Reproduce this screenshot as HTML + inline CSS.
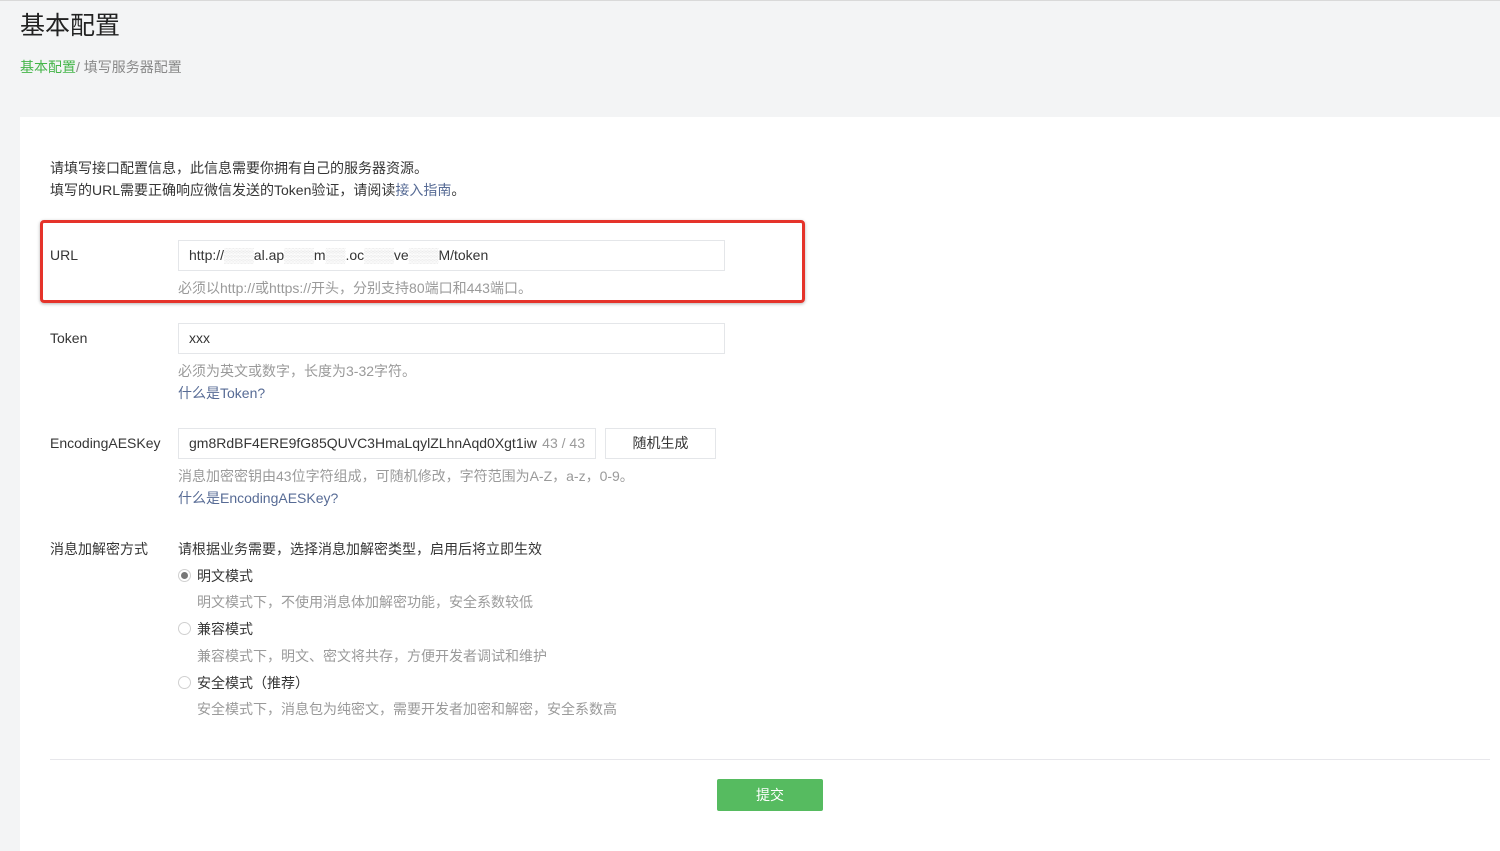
<!DOCTYPE html>
<html><head><meta charset="utf-8"><style>
*{margin:0;padding:0;box-sizing:border-box}
body{width:1500px;height:851px;background:#f3f4f5;font-family:"Liberation Sans","Noto Sans CJK SC",sans-serif;color:#353535;position:relative;overflow:hidden;font-size:14px}
.a{position:absolute;white-space:nowrap}
.card{position:absolute;left:20px;top:117px;width:1480px;height:734px;background:#fff}
.inp{position:absolute;height:31px;border:1px solid #e4e6e9;background:#fff;font-size:14px;line-height:29px;padding-left:10px;color:#353535}
.tip{color:#9a9a9a;font-size:14px}
.lnk{color:#576b95}
.radio{position:absolute;width:13px;height:13px;border-radius:50%;border:1px solid #d0d0d0;background:#fff}
</style></head><body>
<div class="a" style="left:0;top:0;width:1500px;height:1px;background:#d9d9d9"></div>
<div class="a" style="left:20px;top:6px;font-size:25px;color:#222">基本配置</div>
<div class="a" style="left:20px;top:57px;font-size:14px;color:#888"><span style="color:#44b549">基本配置</span>/ 填写服务器配置</div>
<div class="card"></div>
<div class="a" style="left:50px;top:158px">请填写接口配置信息，此信息需要你拥有自己的服务器资源。</div>
<div class="a" style="left:50px;top:180px">填写的URL需要正确响应微信发送的Token验证，请阅读<span class="lnk">接入指南</span>。</div>
<div class="a" style="left:40px;top:220px;width:765px;height:83px;border:3px solid #e5332a;border-radius:4px;box-shadow:0 1px 3px rgba(0,0,0,.3)"></div>
<div class="a" style="left:50px;top:247px">URL</div>
<div class="inp" style="left:178px;top:240px;width:547px">http://<span style="color:#ddd">▒▒▒</span>al.ap<span style="color:#ddd">▒▒▒</span>m<span style="color:#ddd">▒▒</span>.oc<span style="color:#ddd">▒▒▒</span>ve<span style="color:#ddd">▒▒▒</span>M/token</div>
<div class="a tip" style="left:178px;top:278px">必须以http://或https://开头，分别支持80端口和443端口。</div>
<div class="a" style="left:50px;top:330px">Token</div>
<div class="inp" style="left:178px;top:323px;width:547px">xxx</div>
<div class="a tip" style="left:178px;top:361px">必须为英文或数字，长度为3-32字符。</div>
<div class="a lnk" style="left:178px;top:383px">什么是Token?</div>
<div class="a" style="left:50px;top:435px">EncodingAESKey</div>
<div class="inp" style="left:178px;top:428px;width:418px;overflow:hidden">gm8RdBF4ERE9fG85QUVC3HmaLqylZLhnAqd0Xgt1iw<span style="position:absolute;right:0;top:0;background:#fff;color:#9a9a9a;padding:0 10px 0 2px">43 / 43</span></div>
<div class="inp" style="left:605px;top:428px;width:111px;padding:0;text-align:center">随机生成</div>
<div class="a tip" style="left:178px;top:466px">消息加密密钥由43位字符组成，可随机修改，字符范围为A-Z，a-z，0-9。</div>
<div class="a lnk" style="left:178px;top:488px">什么是EncodingAESKey?</div>
<div class="a" style="left:50px;top:539px">消息加解密方式</div>
<div class="a" style="left:178px;top:539px">请根据业务需要，选择消息加解密类型，启用后将立即生效</div>
<div class="radio" style="left:178px;top:569px"></div><div class="a" style="left:181px;top:572px;width:7px;height:7px;border-radius:50%;background:#777"></div>
<div class="a" style="left:197px;top:566px">明文模式</div>
<div class="a tip" style="left:197px;top:592px">明文模式下，不使用消息体加解密功能，安全系数较低</div>
<div class="radio" style="left:178px;top:622px"></div>
<div class="a" style="left:197px;top:619px">兼容模式</div>
<div class="a tip" style="left:197px;top:646px">兼容模式下，明文、密文将共存，方便开发者调试和维护</div>
<div class="radio" style="left:178px;top:676px"></div>
<div class="a" style="left:197px;top:673px">安全模式（推荐）</div>
<div class="a tip" style="left:197px;top:699px">安全模式下，消息包为纯密文，需要开发者加密和解密，安全系数高</div>
<div class="a" style="left:50px;top:759px;width:1440px;height:1px;background:#e7e7eb"></div>
<div class="a" style="left:717px;top:779px;width:106px;height:32px;background:#56bb60;border-radius:2px;color:#fff;text-align:center;line-height:32px">提交</div>
</body></html>
